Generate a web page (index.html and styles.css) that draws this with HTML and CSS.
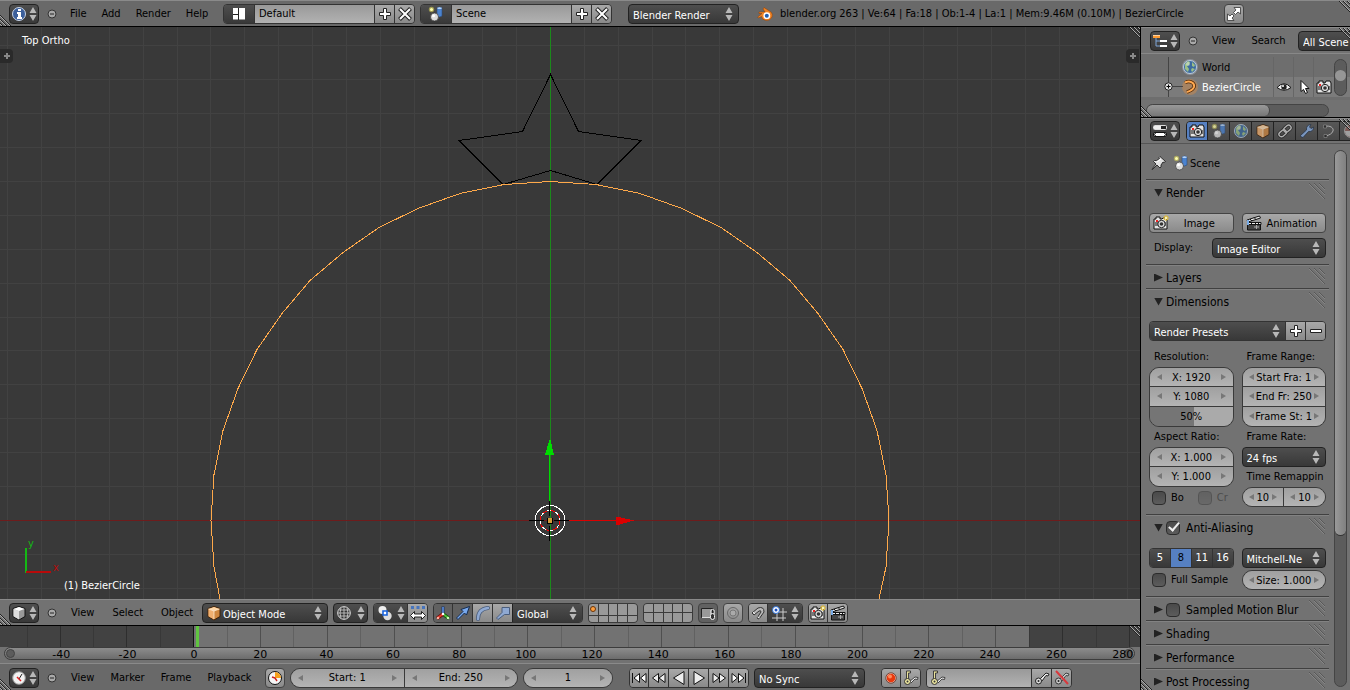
FILE: index.html
```html
<!DOCTYPE html>
<html lang="en">
<head>
    <meta charset="UTF-8">
    <meta name="viewport" content="width=device-width, initial-scale=1.0">
    <title>Blender</title>
    <link rel="stylesheet" href="styles.css">
</head>
<body>
    <!-- icons -->
    <svg class="defs" width="0" height="0" aria-hidden="true">
        <symbol id="arrows" viewBox="0 0 8 14"><path d="M4 0L7.500 6H.5zM4 14L.5 8h7z" fill="#b8b8b8"/></symbol>
        <symbol id="minus" viewBox="0 0 12 12"><circle cx="6" cy="6" r="4" fill="#a9a9a9" stroke="#333"/><path d="M4 6h4" stroke="#222"/></symbol>
        <symbol id="expand" viewBox="0 0 9 9"><circle cx="4.500" cy="4.500" r="3.700" fill="#e4e4e4" stroke="#222"/><path d="M2.500 4.500h4M4.500 2.500v4" stroke="#000"/></symbol>
        <symbol id="info" viewBox="0 0 16 16"><circle cx="8" cy="8" r="6.500" fill="#3b5f9b" stroke="#c8d4e6"/><path d="M7 3h3v2H7zM6 6h4v5h1v2H6v-2h1V8H6z" fill="#fff"/></symbol>
        <symbol id="layout" viewBox="0 0 16 16"><path d="M2 2h5v6H2zM8 2h6v11H8zM2 9h5v4H2z" fill="#fff"/><path d="M2 13.500h12" stroke="#999"/><path d="M2 8.500h6M7.500 2v12" stroke="#222"/></symbol>
        <symbol id="scene" viewBox="0 0 16 16"><path d="M9 2q3-2 5 0v8q-3 2-5 0z" fill="#4b83cf" stroke="#2c4c7a" stroke-width=".6"/><path d="M9.300 2.500q2 1 4.500 0v-.8q-2.500-1-4.500 0z" fill="#b8d4f5"/><circle cx="3.500" cy="3.500" r="2.700" fill="#d4cf5a" opacity=".6"/><circle cx="3.500" cy="3.500" r="1.500" fill="#ffffb0"/><circle cx="6.500" cy="11" r="4" fill="#ddd" stroke="#333" stroke-width=".7"/><circle cx="5.500" cy="9.700" r="1.500" fill="#fff"/></symbol>
        <symbol id="add" viewBox="0 0 16 16"><path d="M6.500 2.500h3v4h4v3h-4v4h-3v-4h-4v-3h4z" fill="#fff" stroke="#222"/></symbol>
        <symbol id="remove" viewBox="0 0 16 16"><path d="M2.500 6.500h11v3h-11z" fill="#fff" stroke="#222"/></symbol>
        <symbol id="close" viewBox="0 0 16 16"><path d="M2.500 2.500l11 11M13.500 2.500l-11 11" stroke="#222" stroke-width="4"/><path d="M3 3L13 13M13 3L3 13" stroke="#fff" stroke-width="2"/></symbol>
        <symbol id="blender" viewBox="0 0 16 16"><path d="M7 1.500L14 6q2 2 1 5-2 4-6 3.500-4-.5-4.500-4L1.500 12 .7 11 5 7.500H2V6h6L6 3z" fill="#ee8224" stroke="#8c3d05" stroke-width=".5"/><circle cx="9.800" cy="9.700" r="3.400" fill="#fff"/><circle cx="9.800" cy="9.700" r="2" fill="#225fb0"/></symbol>
        <symbol id="full" viewBox="0 0 16 16"><path d="M8 1.500h6.500V8L12 6 9.500 8.500l-2-2L10 4zM1.500 8L4 10l2-2 2 2-2 2 2 2.500H1.500z" fill="#fff" stroke="#333" stroke-width=".8"/></symbol>
        <symbol id="tree" viewBox="0 0 16 16"><path d="M4 4v9h4M4 8h4" fill="none" stroke="#7fa6d8"/><path d="M1 2h7v3H1z" fill="#ff9a2e"/><path d="M1 2h7v1H1z" fill="#ffd2a0"/><path d="M8 7h7v2H8zM8 12h7v2H8z" fill="#fff"/></symbol>
        <symbol id="world" viewBox="0 0 16 16"><circle cx="8" cy="8" r="6.500" fill="#3d6ba0" stroke="#bcd"/><path d="M3 5l3-3 2 1-1 3-2 1 2 3-1 3-3-3zM10 3l3 3-1 2-2-1zM10 9l3 1-3 3-1-2z" fill="#9bbf86"/><circle cx="6" cy="5" r="2" fill="#fff" opacity=".35"/></symbol>
        <symbol id="curve" viewBox="0 0 16 16"><path d="M3 3.500C8 1 13 4 12 8c-1 3-4 4-7 5" fill="none" stroke="#4a2405" stroke-width="3.500"/><path d="M3 3.500C8 1 13 4 12 8c-1 3-4 4-7 5" fill="none" stroke="#ffa850" stroke-width="2"/></symbol>
        <symbol id="curvegrey" viewBox="0 0 16 16"><path d="M4 3.500C9 2 13 5 12 8c-1 3-4 4-7 5" fill="none" stroke="#ccc"/><path d="M2.500 2h3v3h-3zM3 11.500h3v3H3z" fill="#222" stroke="#bbb" stroke-width=".5"/></symbol>
        <symbol id="eye" viewBox="0 0 16 16"><path d="M1 8.500Q8 1 15 8.500 8 14 1 8.500z" fill="#eee" stroke="#111"/><circle cx="8" cy="8" r="2.700" fill="#222"/><circle cx="7" cy="7" r="1" fill="#fff"/></symbol>
        <symbol id="pointer" viewBox="0 0 16 16"><path d="M5 1.500v11l2.500-2 2 4 2-1-2-4H13z" fill="#fff" stroke="#111"/></symbol>
        <symbol id="camera" viewBox="0 0 16 16"><path d="M1 4h2V2h4v2h2l1-2h4l1 2v10H1z" fill="#e4e4e4" stroke="#111"/><path d="M1.500 7h13v4h-13z" fill="#777"/><circle cx="9" cy="9" r="3.700" fill="#ddd" stroke="#222"/><circle cx="9" cy="9" r="1.800" fill="#333"/><path d="M3 5h2v2H3z" fill="#e22"/></symbol>
        <symbol id="camstar" viewBox="0 0 16 16"><path d="M1 4h2V2h4v2h2l1-1h3l1 2v9H1z" fill="#e4e4e4" stroke="#111"/><path d="M1.500 7h12v4h-12z" fill="#777"/><circle cx="8.500" cy="9" r="3.700" fill="#ddd" stroke="#222"/><circle cx="8.500" cy="9" r="1.800" fill="#333"/><path d="M3 5h2v2H3z" fill="#e22"/><path d="M13 0v6M10 3h6M11 1l4 4M15 1l-4 4" stroke="#e8bd27"/><circle cx="13" cy="3" r="1.300" fill="#fff6b0"/></symbol>
        <symbol id="clapper" viewBox="0 0 16 16"><path d="M1.500 8h13v7h-13z" fill="#444" stroke="#111"/><path d="M2 7.500h13v2H2zM1 5l12.500-4 1 2-12.500 4z" fill="#eee" stroke="#111"/><path d="M4 4l2 2M8 2.500l2 2M6 7l-1 3M10 7l-1 3M13 7l-1 3" stroke="#111"/><path d="M8 12h5M10.500 10v4" stroke="#aaa"/><path d="M1 5h2v5H1z" fill="#77aae5"/></symbol>
        <symbol id="props" viewBox="0 0 16 16"><rect x="1.500" y="2.500" width="13" height="4" rx="1" fill="#222" stroke="#ddd"/><path d="M2 3h7v3H2z" fill="#eee"/><rect x="1.500" y="9.500" width="13" height="4" rx="1.500" fill="#fff" stroke="#111"/><path d="M4 10l-2 1.500L4 13M12 10l2 1.500-2 1.500" fill="none" stroke="#333"/></symbol>
        <symbol id="cube" viewBox="0 0 16 16"><path d="M8 1.500l6 2v8L8 15l-6-3.500v-8z" fill="#cf8740" stroke="#3e2108"/><path d="M2.500 4L8 6v8.500l-5.500-3.300z" fill="#f0b071"/><path d="M2.500 4L8 2l5.500 2L8 6z" fill="#ffd6a6"/><path d="M2.500 4L8 6l5.500-2M8 6v8" fill="none" stroke="#fff0dc" stroke-width=".7"/></symbol>
        <symbol id="cubegrey" viewBox="0 0 16 16"><path d="M8 1.500l6 2v8L8 15l-6-3.500v-8z" fill="#999" stroke="#111"/><path d="M2.500 4L8 6v8.500l-5.500-3.300z" fill="#ddd"/><path d="M2.500 4L8 2l5.500 2L8 6z" fill="#fff"/></symbol>
        <symbol id="chain" viewBox="0 0 16 16"><g fill="none" stroke="#222" stroke-width="3"><rect x="6.500" y="3.500" width="8" height="5" rx="2.500" transform="rotate(-40 10 6)"/><rect x="1.500" y="7.500" width="8" height="5" rx="2.500" transform="rotate(-40 6 10)"/></g><g fill="none" stroke="#d0d0d0" stroke-width="1.400"><rect x="6.500" y="3.500" width="8" height="5" rx="2.500" transform="rotate(-40 10 6)"/><rect x="1.500" y="7.500" width="8" height="5" rx="2.500" transform="rotate(-40 6 10)"/></g></symbol>
        <symbol id="wrench" viewBox="0 0 16 16"><path d="M1.500 12.500L7.500 7q-.5-5 4.500-5.500L10.500 4 12 5.500 14.500 4q0 5-5 4.500L4 14.500q-2.500 0-2.500-2z" fill="#88aee4" stroke="#1c2b42" stroke-width=".8"/></symbol>
        <symbol id="sphere" viewBox="0 0 16 16"><circle cx="8" cy="8" r="6.500" fill="#8b5c58" stroke="#aaa"/><path d="M8 2v6h6q0-5-6-6zM2 8h6v6Q2 13 2 8z" fill="#bbb"/></symbol>
        <symbol id="pin" viewBox="0 0 16 16"><path d="M9 1.500l5.500 5-1.500 1-1-.5-2 3v2l-1 1-3-3L2 14l-1 .5.500-1L5 9 2.500 6.500l1-1h2l3-2-.5-1z" fill="#e2e2e2" stroke="#222" stroke-width=".9"/><path d="M6 7l4-3" stroke="#fff"/></symbol>
        <symbol id="tripod" viewBox="0 0 16 16"><path d="M8 1.500V9" stroke="#1d3560" stroke-width="3"/><path d="M8 2v7" stroke="#5a8de0" stroke-width="1.600"/><path d="M8 9l6 4.500" stroke="#15500c" stroke-width="3.500"/><path d="M8 9l5.500 4" stroke="#4cc43a" stroke-width="2"/><path d="M8 9l-6 4.500" stroke="#6b0f0a" stroke-width="3.500"/><path d="M8 9l-5.500 4" stroke="#ee3a2c" stroke-width="2"/><circle cx="3" cy="13" r="1.300" fill="#ffb0a0"/><circle cx="13" cy="13" r="1.300" fill="#c8f8b4"/><circle cx="8" cy="9" r="1.300" fill="#fff"/></symbol>
        <symbol id="translate" viewBox="0 0 16 16"><path d="M1.500 13L8 6.500l-2-2 8.500-3-3 8.500-2-2L3 14.500z" fill="#78a8ec" stroke="#142a4e"/></symbol>
        <symbol id="rotate" viewBox="0 0 16 16"><path d="M3 14Q3 4 13 3" fill="none" stroke="#4a5d7c" stroke-width="4" stroke-linecap="round"/><path d="M3 14Q3 4 13 3" fill="none" stroke="#8fa9d2" stroke-width="2.400" stroke-linecap="round"/></symbol>
        <symbol id="scale" viewBox="0 0 16 16"><path d="M1.500 13L7 7.500v-5h7.500v7h-5L3 14.500z" fill="#8fa9d2" stroke="#4a5d7c"/></symbol>
        <symbol id="globe" viewBox="0 0 16 16"><circle cx="8" cy="8" r="6.300" fill="#333" stroke="#e6e6e6"/><path d="M8 2v12M2 8h12M5 3Q3 8 5 13M11 3q2 5 0 10M3 5h10M3 11h10" fill="none" stroke="#c4c4c4" stroke-width=".9"/></symbol>
        <symbol id="pivot" viewBox="0 0 16 16"><circle cx="5.500" cy="5" r="4" fill="#eee"/><circle cx="10.500" cy="11" r="4.200" fill="#ddd"/><path d="M6 6h4v4H6z" fill="#fff" stroke="#1762dd" stroke-width="1.600"/></symbol>
        <symbol id="spread" viewBox="0 0 16 16"><path d="M1 1h3v3H1zM6.500 1h3v3h-3zM12 1h3v3h-3z" fill="#4674bd"/><path d="M.5 10.500l4-4V9h7V6.500l4 4-4 4V12h-7v2.500z" fill="#fff" stroke="#111" stroke-width=".9"/></symbol>
        <symbol id="lock" viewBox="0 0 16 16"><path d="M1.500 3.500h11v9h-11z" fill="#999" stroke="#222"/><path d="M2 12.500h11" stroke="#ddd"/><rect x="10.500" y="4.500" width="4" height="5" rx="2" fill="none" stroke="#ddd"/><rect x="10.500" y="8.500" width="4" height="6" rx="2" fill="#333" stroke="#eee"/></symbol>
        <symbol id="ring" viewBox="0 0 16 16"><circle cx="8" cy="8" r="5.500" fill="none" stroke="#666"/><circle cx="8" cy="8" r="3" fill="#aaa" stroke="#777"/></symbol>
        <symbol id="magnet" viewBox="0 0 16 16"><path d="M2 8l6-5q6-2 6 4l-5 7-2-1 4-6q0-2-2-1L4 10z" fill="#bbb" stroke="#333"/><path d="M3 7l2 2M7.500 12l2 1" stroke="#eee"/></symbol>
        <symbol id="snap" viewBox="0 0 16 16"><path d="M6 2v14M12 3v13M2 7h14M1 13h14" stroke="#ccc"/><circle cx="5" cy="5" r="3.500" fill="#fff" stroke="#2b6fd6"/><circle cx="5" cy="5" r="1.500" fill="#1c4fbd"/></symbol>
        <symbol id="clock" viewBox="0 0 16 16"><circle cx="8" cy="8" r="6.300" fill="#f2f2f2" stroke="#999"/><path d="M8 9l3-5" stroke="#222"/><path d="M8 9L6 7M8 9l2 2" stroke="#d22" stroke-width="1.500"/></symbol>
        <symbol id="range" viewBox="0 0 16 16"><circle cx="8" cy="8" r="6.500" fill="#f6f6f6" stroke="#111"/><path d="M8 2a6 6 0 0 1 6 6H8z" fill="#f7a11c"/><path d="M8 8l2 3M8 8L5 7" stroke="#c22" stroke-width="1.400"/></symbol>
        <symbol id="first" viewBox="0 0 16 16"><path d="M1.500 3v10M8.500 3.500v9L3 8zM15 3.500v9L9.500 8z" fill="#fff" stroke="#111"/></symbol>
        <symbol id="prev" viewBox="0 0 16 16"><path d="M7.500 3.500v9L1.500 8zM14 3.500v9L8 8z" fill="#eee" stroke="#111"/></symbol>
        <symbol id="back" viewBox="0 0 16 16"><path d="M13 1.500v13L2.500 8z" fill="#eee" stroke="#111"/></symbol>
        <symbol id="play" viewBox="0 0 16 16"><path d="M3 1.500v13L13.500 8z" fill="#eee" stroke="#111"/></symbol>
        <symbol id="next" viewBox="0 0 16 16"><path d="M8.500 3.500v9l6-4.500zM2 3.500v9L8 8z" fill="#eee" stroke="#111"/></symbol>
        <symbol id="last" viewBox="0 0 16 16"><path d="M14.500 3v10M7.500 3.500v9L13 8zM1 3.500v9L6.500 8z" fill="#fff" stroke="#111"/></symbol>
        <symbol id="rec" viewBox="0 0 16 16"><circle cx="8" cy="8" r="4.700" fill="#e8380d" stroke="#fff" stroke-width=".6"/><circle cx="8" cy="8" r="5.200" fill="none" stroke="#5d1a08" stroke-width=".7"/><circle cx="7" cy="6.500" r="2" fill="#ff8a5c"/></symbol>
        <symbol id="keys" viewBox="0 0 16 16"><path d="M3.500 9V1h4v2H5.500v6" fill="#e9e29a" stroke="#333" stroke-width=".9"/><path d="M6 12l6-5 3 .5-.5 2-2.500-.5-4 4" fill="#eee" stroke="#333" stroke-width=".9"/><circle cx="4.500" cy="11.500" r="3" fill="#eee8a0" stroke="#333"/><circle cx="4.500" cy="11.500" r="1" fill="#333"/></symbol>
        <symbol id="key" viewBox="0 0 16 16"><path d="M6 9l6-6 3 1-1 2-2-.5L8 11" fill="#eee" stroke="#222"/><circle cx="4.500" cy="11" r="3" fill="#ddd" stroke="#222"/><circle cx="4.500" cy="11" r="1" fill="#222"/></symbol>
        <symbol id="nokey" viewBox="0 0 16 16"><path d="M6 9l6-6 3 1-1 2-2-.5L8 11" fill="#ccc" stroke="#444"/><circle cx="4.500" cy="11" r="3" fill="#ccc" stroke="#333"/><circle cx="4.500" cy="11" r="1" fill="#222"/><path d="M2 1l12 13" stroke="#d9383c" stroke-width="2"/></symbol>
        <symbol id="corner" viewBox="0 0 12 12"><path d="M0 1l11 11M0 5l7 7M0 9l3 3" stroke="#222"/><path d="M0 2l10 10M0 6l6 6M0 10l2 2" stroke="#aaa"/></symbol>
        <symbol id="grip" viewBox="0 0 16 16"><path d="M0 0l16 16M5 0l11 11M10 0l6 6" stroke="#585858"/><path d="M0 1l15 15M5 1l11 11M10 1l6 6" stroke="#858585"/></symbol>
    </svg>

    <header class="bar info-bar">
        <button class="dark editor" aria-label="Editor type"><svg class="icon"><use href="#info"/></svg><svg class="arrows"><use href="#arrows"/></svg></button>
        <button class="collapse" aria-label="Collapse menus"><svg><use href="#minus"/></svg></button>
        <nav class="menu"><a href="#">File</a><a href="#">Add</a><a href="#">Render</a><a href="#">Help</a></nav>
        <div class="group datablock">
            <button class="dark" aria-label="Browse layouts"><svg class="icon"><use href="#layout"/></svg></button>
            <input type="text" value="Default" aria-label="Layout name">
            <button aria-label="Add layout"><svg class="icon"><use href="#add"/></svg></button>
            <button aria-label="Delete layout"><svg class="icon"><use href="#close"/></svg></button>
        </div>
        <div class="group datablock">
            <button class="dark" aria-label="Browse scenes"><svg class="icon"><use href="#scene"/></svg></button>
            <input type="text" value="Scene" aria-label="Scene name">
            <button aria-label="Add scene"><svg class="icon"><use href="#add"/></svg></button>
            <button aria-label="Delete scene"><svg class="icon"><use href="#close"/></svg></button>
        </div>
        <div class="pick engine"><select aria-label="Render engine"><option>Blender Render</option></select><svg class="arrows"><use href="#arrows"/></svg></div>
        <div class="stats"><svg class="icon"><use href="#blender"/></svg><span>blender.org 263 | Ve:64 | Fa:18 | Ob:1-4 | La:1 | Mem:9.46M (0.10M) | BezierCircle</span></div>
        <button class="square" aria-label="Toggle fullscreen"><svg class="icon"><use href="#full"/></svg></button>
        <svg class="corner bottom-left"><use href="#corner"/></svg>
        <svg class="corner top-right"><use href="#corner"/></svg>
    </header>

    <div class="workspace">
        <main class="left">
            <section class="viewport">
                <svg class="scene" viewBox="0 0 1140 572" preserveAspectRatio="xMidYMid slice" fill="none" shape-rendering="crispEdges">
                    <path stroke="#424242" d="M7.500 0v572M41.500 0v572M75.500 0v572M109.500 0v572M143.500 0v572M177.500 0v572M210.500 0v572M244.500 0v572M278.500 0v572M312.500 0v572M346.500 0v572M380.500 0v572M414.500 0v572M448.500 0v572M482.500 0v572M516.500 0v572M584.500 0v572M618.500 0v572M652.500 0v572M685.500 0v572M719.500 0v572M753.500 0v572M787.500 0v572M821.500 0v572M855.500 0v572M889.500 0v572M923.500 0v572M957.500 0v572M991.500 0v572M1025.500 0v572M1059.500 0v572M1093.500 0v572M1127.500 0v572"/>
                    <path stroke="#424242" d="M0 18.500h1140M0 52.500h1140M0 86.500h1140M0 120.500h1140M0 154.500h1140M0 188.500h1140M0 222.500h1140M0 256.500h1140M0 290.500h1140M0 323.500h1140M0 357.500h1140M0 391.500h1140M0 425.500h1140M0 459.500h1140M0 527.500h1140M0 561.500h1140"/>
                    <path stroke="#6e1c1c" d="M0 493.500h1140"/>
                    <path stroke="#1b8a1b" d="M550.500 0v572"/>
                    <path stroke="#000" d="M550.500 47.500L578.500 104.500L641 113.500L597 157.500L550.500 143.500L503 157.500L459 113.500L522.500 104.500Z"/>
                    <path stroke="#ffa94a" d="M220 572L214 540L211 493.500L214 447.500L223 403.500L238 361.500L257 322.500L282 286.500L310 253.500L343 225.500L379 200.500L418 181.500L460 166.500L504 157.500L550 154.500L596 157.500L640 166.500L682 181.500L721 200.500L757 225.500L790 253.500L818 286.500L843 322.500L862 361.500L877 403.500L886 447.500L889 493.500L886 540L879 572"/>
                    <path stroke="#00dc00" d="M549.500 428v46"/>
                    <path fill="#00dc00" d="M550 411l4 17h-9z"/>
                    <path stroke="#dc0000" d="M569 493.500h48"/>
                    <path fill="#dc0000" d="M634 493.500l-18 5v-9z"/>
                    <circle cx="550" cy="493.500" r="15" stroke="#fff"/>
                    <circle cx="550" cy="493.500" r="10" stroke="#fff"/>
                    <circle cx="550" cy="493.500" r="10" stroke="#f00" stroke-dasharray="4 4"/>
                    <path stroke="#000" d="M529 493.500h15M554 493.500h15M549.500 474v15M549.500 499v15"/>
                    <path fill="#000" d="M547 491h6v6h-6z"/>
                    <path fill="#d29a3c" d="M548 491h4v5h-4z"/>
                    <path stroke="#14b814" stroke-width="2" d="M26 521v25"/>
                    <path stroke="#b80a0a" stroke-width="2" d="M26 545h25"/>
                </svg>
                <span class="overlay view-name">Top Ortho</span>
                <span class="overlay object-name">(1) BezierCircle</span>
                <span class="overlay axis-y">y</span>
                <span class="overlay axis-x">x</span>
                <button class="tab tab-left" aria-label="Show tool shelf"></button>
                <button class="tab tab-right" aria-label="Show properties"></button>
                <svg class="corner top-right"><use href="#corner"/></svg>
            </section>

            <div class="bar view-bar">
                <button class="dark editor" aria-label="Editor type"><svg class="icon"><use href="#cubegrey"/></svg><svg class="arrows"><use href="#arrows"/></svg></button>
                <button class="collapse" aria-label="Collapse menus"><svg><use href="#minus"/></svg></button>
                <nav class="menu"><a href="#">View</a><a href="#">Select</a><a href="#">Object</a></nav>
                <div class="pick mode"><svg class="icon"><use href="#cube"/></svg><select aria-label="Mode"><option>Object Mode</option></select><svg class="arrows"><use href="#arrows"/></svg></div>
                <button class="dark shading" aria-label="Viewport shading"><svg class="icon"><use href="#globe"/></svg><svg class="arrows"><use href="#arrows"/></svg></button>
                <div class="group">
                    <button class="dark wide" aria-label="Pivot point"><svg class="icon"><use href="#pivot"/></svg><svg class="arrows"><use href="#arrows"/></svg></button>
                    <button aria-label="Manipulate centers"><svg class="icon"><use href="#spread"/></svg></button>
                </div>
                <div class="group manipulator">
                    <button class="pressed" aria-label="Manipulator"><svg class="icon"><use href="#tripod"/></svg></button>
                    <button class="pressed" aria-label="Translate"><svg class="icon"><use href="#translate"/></svg></button>
                    <button aria-label="Rotate"><svg class="icon"><use href="#rotate"/></svg></button>
                    <button aria-label="Scale"><svg class="icon"><use href="#scale"/></svg></button>
                    <div class="pick"><select aria-label="Orientation"><option>Global</option></select><svg class="arrows"><use href="#arrows"/></svg></div>
                </div>
                <div class="layers">
                    <button class="used" aria-label="Layer 1"></button><button aria-label="Layer 2"></button><button aria-label="Layer 3"></button><button aria-label="Layer 4"></button><button aria-label="Layer 5"></button>
                    <button aria-label="Layer 11"></button><button aria-label="Layer 12"></button><button aria-label="Layer 13"></button><button aria-label="Layer 14"></button><button aria-label="Layer 15"></button>
                </div>
                <div class="layers">
                    <button aria-label="Layer 6"></button><button aria-label="Layer 7"></button><button aria-label="Layer 8"></button><button aria-label="Layer 9"></button><button aria-label="Layer 10"></button>
                    <button aria-label="Layer 16"></button><button aria-label="Layer 17"></button><button aria-label="Layer 18"></button><button aria-label="Layer 19"></button><button aria-label="Layer 20"></button>
                </div>
                <button class="square pressed" aria-label="Lock to scene"><svg class="icon"><use href="#lock"/></svg></button>
                <button class="square" aria-label="Proportional editing"><svg class="icon"><use href="#ring"/></svg></button>
                <div class="group">
                    <button aria-label="Snap"><svg class="icon"><use href="#magnet"/></svg></button>
                    <button class="dark wide" aria-label="Snap element"><svg class="icon"><use href="#snap"/></svg><svg class="arrows"><use href="#arrows"/></svg></button>
                </div>
                <div class="group">
                    <button aria-label="Render image"><svg class="icon"><use href="#camstar"/></svg></button>
                    <button aria-label="Render animation"><svg class="icon"><use href="#clapper"/></svg></button>
                </div>
                <svg class="corner bottom-left"><use href="#corner"/></svg>
            </div>

            <section class="timeline">
                <svg class="track" viewBox="0 0 1140 20" preserveAspectRatio="none" shape-rendering="crispEdges">
                    <path fill="#424242" d="M0 0h1140v20H0z"/>
                    <path fill="#727272" d="M194 0h835v20H194z"/>
                    <path stroke="#000" stroke-opacity=".15" d="M27.500 0v20M93.500 0v20M160.500 0v20M227.500 0v20M293.500 0v20M360.500 0v20M427.500 0v20M494.500 0v20M561.500 0v20M628.500 0v20M694.500 0v20M761.500 0v20M828.500 0v20M895.500 0v20M962.500 0v20M1029.500 0v20M1096.500 0v20"/>
                    <path stroke="#000" stroke-opacity=".3" d="M60.500 0v20M126.500 0v20M193.500 0v20M260.500 0v20M327.500 0v20M394.500 0v20M461.500 0v20M527.500 0v20M594.500 0v20M661.500 0v20M728.500 0v20M795.500 0v20M862.500 0v20M928.500 0v20M995.500 0v20M1062.500 0v20M1129.500 0v20"/>
                    <path fill="#111" d="M193 0h1v20h-1z"/>
                    <path fill="#60c440" d="M196 0h3v20h-3z"/>
                </svg>
                <div class="time-scroll"></div>
                <div class="time-labels">
                    <span>-40</span><span>-20</span><span>0</span><span>20</span><span>40</span><span>60</span><span>80</span><span>100</span><span>120</span><span>140</span><span>160</span><span>180</span><span>200</span><span>220</span><span>240</span><span>260</span><span>280</span>
                </div>
                <svg class="corner top-right"><use href="#corner"/></svg>
            </section>

            <footer class="bar time-bar">
                <button class="dark editor" aria-label="Editor type"><svg class="icon"><use href="#clock"/></svg><svg class="arrows"><use href="#arrows"/></svg></button>
                <button class="collapse" aria-label="Collapse menus"><svg><use href="#minus"/></svg></button>
                <nav class="menu"><a href="#">View</a><a href="#">Marker</a><a href="#">Frame</a><a href="#">Playback</a></nav>
                <button class="square" aria-label="Preview range"><svg class="icon"><use href="#range"/></svg></button>
                <div class="numbers frames"><label class="num"><input type="text" value="Start: 1" aria-label="Start frame"></label><label class="num"><input type="text" value="End: 250" aria-label="End frame"></label></div>
                <div class="numbers current"><label class="num"><input type="text" value="1" aria-label="Current frame"></label></div>
                <div class="group playback">
                    <button aria-label="First frame"><svg class="icon"><use href="#first"/></svg></button>
                    <button aria-label="Previous keyframe"><svg class="icon"><use href="#prev"/></svg></button>
                    <button aria-label="Play reversed"><svg class="icon"><use href="#back"/></svg></button>
                    <button aria-label="Play"><svg class="icon"><use href="#play"/></svg></button>
                    <button aria-label="Next keyframe"><svg class="icon"><use href="#next"/></svg></button>
                    <button aria-label="Last frame"><svg class="icon"><use href="#last"/></svg></button>
                </div>
                <div class="pick sync"><select aria-label="Sync mode"><option>No Sync</option></select><svg class="arrows"><use href="#arrows"/></svg></div>
                <div class="group record">
                    <button aria-label="Record"><svg class="icon"><use href="#rec"/></svg></button>
                    <button aria-label="Keying set only"><svg class="icon"><use href="#keys"/></svg></button>
                </div>
                <div class="group keying">
                    <div class="keyset"><svg class="icon"><use href="#keys"/></svg><input type="text" aria-label="Keying set"></div>
                    <button aria-label="Insert keyframe"><svg class="icon"><use href="#key"/></svg></button>
                    <button aria-label="Delete keyframe"><svg class="icon"><use href="#nokey"/></svg></button>
                </div>
                <svg class="corner bottom-left"><use href="#corner"/></svg>
            </footer>
        </main>

        <aside class="right">
            <section class="outliner">
                <div class="bar">
                    <button class="dark editor" aria-label="Editor type"><svg class="icon"><use href="#tree"/></svg><svg class="arrows"><use href="#arrows"/></svg></button>
                    <button class="collapse" aria-label="Collapse menus"><svg><use href="#minus"/></svg></button>
                    <nav class="menu"><a href="#">View</a><a href="#">Search</a></nav>
                    <div class="pick scenes"><select aria-label="Display mode"><option>All Scene</option></select></div>
                    <svg class="corner top-right"><use href="#corner"/></svg>
                </div>
                <div class="tree">
                    <div class="tree-row"><span class="branch"></span><svg class="icon halo"><use href="#world"/></svg><span class="name">World</span><span class="cell"></span><span class="cell"></span><span class="cell"></span></div>
                    <div class="tree-row selected"><span class="branch plus"><svg class="expand"><use href="#expand"/></svg></span><svg class="icon halo orange"><use href="#curve"/></svg><span class="name">BezierCircle</span>
                        <button class="cell" aria-label="Visible"><svg class="icon"><use href="#eye"/></svg></button>
                        <button class="cell" aria-label="Selectable"><svg class="icon"><use href="#pointer"/></svg></button>
                        <button class="cell" aria-label="Renderable"><svg class="icon"><use href="#camera"/></svg></button>
                    </div>
                    <div class="tree-scroll"></div>
                </div>
                <div class="h-scroll"><div class="h-thumb"></div></div>
                <svg class="corner bottom-left"><use href="#corner"/></svg>
            </section>

            <section class="properties">
                <div class="bar">
                    <button class="dark editor" aria-label="Editor type"><svg class="icon"><use href="#props"/></svg><svg class="arrows"><use href="#arrows"/></svg></button>
                    <div class="tabs">
                        <button class="active" aria-label="Render"><svg class="icon"><use href="#camera"/></svg></button>
                        <button aria-label="Scene"><svg class="icon"><use href="#scene"/></svg></button>
                        <button aria-label="World"><svg class="icon"><use href="#world"/></svg></button>
                        <button aria-label="Object"><svg class="icon"><use href="#cube"/></svg></button>
                        <button aria-label="Constraints"><svg class="icon"><use href="#chain"/></svg></button>
                        <button aria-label="Modifiers"><svg class="icon"><use href="#wrench"/></svg></button>
                        <button aria-label="Data"><svg class="icon"><use href="#curvegrey"/></svg></button>
                        <button aria-label="Material"><svg class="icon"><use href="#sphere"/></svg></button>
                    </div>
                    <svg class="corner top-right"><use href="#corner"/></svg>
                </div>
                <div class="props-body">
                    <div class="panels">
                        <div class="context"><svg class="icon"><use href="#pin"/></svg><svg class="icon"><use href="#scene"/></svg><span>Scene</span></div>

                        <div class="panel">
                            <h2 class="open">Render<svg class="grip"><use href="#grip"/></svg></h2>
                            <div class="columns">
                                <button class="action"><svg class="icon"><use href="#camstar"/></svg><span>Image</span></button>
                                <button class="action"><svg class="icon"><use href="#clapper"/></svg><span>Animation</span></button>
                            </div>
                            <div class="field"><label for="display">Display:</label><div class="pick"><select id="display"><option>Image Editor</option></select><svg class="arrows"><use href="#arrows"/></svg></div></div>
                        </div>

                        <div class="panel">
                            <h2>Layers<svg class="grip"><use href="#grip"/></svg></h2>
                        </div>

                        <div class="panel dimensions">
                            <h2 class="open">Dimensions<svg class="grip"><use href="#grip"/></svg></h2>
                            <div class="group presets">
                                <div class="pick"><select aria-label="Render presets"><option>Render Presets</option></select><svg class="arrows"><use href="#arrows"/></svg></div>
                                <button aria-label="Add preset"><svg class="icon"><use href="#add"/></svg></button>
                                <button aria-label="Remove preset"><svg class="icon"><use href="#remove"/></svg></button>
                            </div>
                            <div class="columns">
                                <div class="column">
                                    <p>Resolution:</p>
                                    <div class="numbers stack">
                                        <label class="num"><input type="text" value="X: 1920" aria-label="Resolution X"></label>
                                        <label class="num"><input type="text" value="Y: 1080" aria-label="Resolution Y"></label>
                                        <label class="num percent"><input type="text" value="50%" aria-label="Resolution percentage"></label>
                                    </div>
                                    <p>Aspect Ratio:</p>
                                    <div class="numbers stack">
                                        <label class="num"><input type="text" value="X: 1.000" aria-label="Aspect X"></label>
                                        <label class="num"><input type="text" value="Y: 1.000" aria-label="Aspect Y"></label>
                                    </div>
                                    <div class="checks"><label><input type="checkbox">Bo</label><label class="off"><input type="checkbox" disabled>Cr</label></div>
                                </div>
                                <div class="column">
                                    <p>Frame Range:</p>
                                    <div class="numbers stack tight">
                                        <label class="num"><input type="text" value="Start Fra: 1" aria-label="Start frame"></label>
                                        <label class="num"><input type="text" value="End Fr: 250" aria-label="End frame"></label>
                                        <label class="num"><input type="text" value="Frame St: 1" aria-label="Frame step"></label>
                                    </div>
                                    <p>Frame Rate:</p>
                                    <div class="pick"><select aria-label="Frame rate"><option>24 fps</option></select><svg class="arrows"><use href="#arrows"/></svg></div>
                                    <p>Time Remappin</p>
                                    <div class="numbers tight"><label class="num"><input type="text" value="10" aria-label="Remap old"></label><label class="num"><input type="text" value="10" aria-label="Remap new"></label></div>
                                </div>
                            </div>
                        </div>

                        <div class="panel">
                            <h2 class="open"><input type="checkbox" checked aria-label="Anti-Aliasing">Anti-Aliasing<svg class="grip"><use href="#grip"/></svg></h2>
                            <div class="columns">
                                <div class="group samples"><button class="dark">5</button><button class="dark chosen">8</button><button class="dark">11</button><button class="dark">16</button></div>
                                <div class="pick"><select aria-label="Filter"><option>Mitchell-Ne</option></select><svg class="arrows"><use href="#arrows"/></svg></div>
                            </div>
                            <div class="columns close">
                                <div class="checks"><label><input type="checkbox">Full Sample</label></div>
                                <div class="numbers tight"><label class="num"><input type="text" value="Size: 1.000" aria-label="Filter size"></label></div>
                            </div>
                        </div>

                        <div class="panel"><h2><input type="checkbox" aria-label="Sampled Motion Blur">Sampled Motion Blur<svg class="grip"><use href="#grip"/></svg></h2></div>
                        <div class="panel"><h2>Shading<svg class="grip"><use href="#grip"/></svg></h2></div>
                        <div class="panel"><h2>Performance<svg class="grip"><use href="#grip"/></svg></h2></div>
                        <div class="panel"><h2>Post Processing<svg class="grip"><use href="#grip"/></svg></h2></div>
                    </div>
                    <div class="v-scroll"><div class="v-thumb"></div></div>
                </div>
                <svg class="corner bottom-left"><use href="#corner"/></svg>
            </section>
        </aside>
    </div>
</body>
</html>
```
FILE: styles.css
```css
* {
    box-sizing: border-box;
}
body {
    margin: 0;
    height: 100vh;
    display: flex;
    flex-direction: column;
    overflow: hidden;
    background: #727272;
    color: #000;
    font: 11px/20px "DejaVu Sans Condensed", "DejaVu Sans", sans-serif;
}
.defs {
    position: absolute;
}
button, input, select {
    font: inherit;
    color: inherit;
    margin: 0;
    padding: 0;
    border: 0;
    outline: 0;
    border-radius: 0;
    background: none;
    appearance: none;
    min-width: 0;
}
input[type="text"], select {
    padding-top: 1px;
}
button {
    display: flex;
    align-items: center;
    justify-content: center;
    flex-shrink: 0;
}
a {
    color: inherit;
    text-decoration: none;
}
.icon {
    width: 16px;
    height: 16px;
    flex-shrink: 0;
}
.arrows {
    width: 8px;
    height: 14px;
    flex-shrink: 0;
}

/* headers */
.bar {
    position: relative;
    display: flex;
    align-items: center;
    gap: 5px;
    height: 27px;
    padding-left: 9px;
    flex-shrink: 0;
    overflow: hidden;
    white-space: nowrap;
    background: #727272;
    border-top: 1px solid #8a8a8a;
    border-bottom: 1px solid #000;
}
.info-bar, .time-bar {
    background: #696969;
}
.editor {
    width: 30px;
    height: 20px;
    gap: 2px;
    border: 1px solid #222;
    border-radius: 4px;
}
.dark {
    background: linear-gradient(#4e4e4e, #383838);
    color: #fff;
}
.collapse {
    width: 12px;
    height: 12px;
    margin: 0 7px 0 2px;
}
.collapse svg {
    width: 12px;
    height: 12px;
}
.menu {
    display: flex;
    gap: 15px;
    width: 148px;
    padding-top: 1px;
    flex-shrink: 0;
}
.view-bar .menu {
    width: 127px;
    padding-left: 1px;
    gap: 18px;
}
.time-bar .menu {
    width: 190px;
    padding-left: 1px;
    gap: 16px;
}
.outliner .menu {
    width: 82px;
    padding-left: 1px;
    gap: 16px;
}
.group {
    display: flex;
    height: 20px;
    flex-shrink: 0;
    overflow: hidden;
    border: 1px solid #333;
    border-radius: 4px;
}
.group > * {
    border-left: 1px solid #333;
}
.group > :first-child {
    border-left: 0;
}
.group > button {
    width: 20px;
    background: linear-gradient(#a8a8a8, #8a8a8a);
}
.group > button:first-child {
    width: 18px;
}
.group > button.dark {
    background: linear-gradient(#4e4e4e, #383838);
}
.group > button.wide {
    width: 35px;
    gap: 4px;
}
.group > button.wide:first-child {
    width: 33px;
}
.group > button.pressed, .square.pressed {
    background: #616161;
}
.datablock {
    width: 192px;
}
.group.datablock > button:first-child {
    width: 30px;
}
.datablock input {
    flex: 1;
    padding-left: 4px;
    background: linear-gradient(#999, #b2b2b2);
}
.square {
    width: 20px;
    height: 20px;
    border: 1px solid #444;
    border-radius: 4px;
    background: linear-gradient(#a8a8a8, #8a8a8a);
}
.pick {
    position: relative;
    display: flex;
    align-items: center;
    height: 20px;
    flex-shrink: 0;
    color: #fff;
    border: 1px solid #222;
    border-radius: 4px;
    background: linear-gradient(#4e4e4e, #383838);
}
.group .pick {
    height: 18px;
    flex: 1;
    border-width: 0 0 0 1px;
    border-radius: 0;
}
.group .pick:first-child {
    border-left: 0;
}
.pick select {
    width: 100%;
    height: 18px;
    padding-left: 4px;
}
.pick option {
    color: #000;
}
.pick .arrows {
    position: absolute;
    right: 5px;
    pointer-events: none;
}
.engine, .sync {
    width: 111px;
}
.engine, .playback, .record {
    margin-left: 11px;
}
.stats {
    display: flex;
    align-items: center;
    gap: 7px;
    margin: 0 35px 0 13px;
}
.stats span {
    padding-top: 1px;
}
.mode {
    width: 126px;
}
.mode .icon {
    margin-left: 3px;
}
.mode select {
    padding-left: 1px;
}
.shading {
    width: 35px;
    height: 20px;
    gap: 5px;
    border: 1px solid #222;
    border-radius: 4px;
}
.manipulator {
    width: 150px;
}
.layers {
    display: grid;
    grid-template-columns: repeat(5, 1fr);
    gap: 1px;
    width: 50px;
    height: 20px;
    flex-shrink: 0;
    overflow: hidden;
    background: #3a3a3a;
    border: 1px solid #3a3a3a;
    border-radius: 4px;
}
.layers button {
    background: #999;
}
.layers .used::before {
    content: "";
    box-sizing: border-box;
    width: 6px;
    height: 6px;
    border: 1px solid #6b3305;
    border-radius: 50%;
    background: #ffa040;
}

/* number fields */
.numbers {
    display: flex;
    height: 20px;
    flex-shrink: 0;
    overflow: hidden;
    border: 1px solid #3a3a3a;
    border-radius: 10px;
}
.num {
    position: relative;
    display: flex;
    flex: 1;
    min-width: 0;
    background: linear-gradient(#a0a0a0, #b4b4b4);
}
.num + .num {
    border-left: 1px solid #3a3a3a;
}
.num input {
    width: 100%;
    height: 18px;
    text-align: center;
}
.num::before, .num::after {
    content: "";
    position: absolute;
    top: 6px;
    border: 3px solid transparent;
}
.num::before {
    left: 4px;
    border-right: 5px solid #777;
}
.num::after {
    right: 4px;
    border-left: 5px solid #777;
}
.tight .num::before {
    left: 3px;
}
.tight .num::after {
    right: 3px;
}
.frames {
    width: 228px;
}
.current {
    width: 90px;
}
.numbers.stack {
    flex-direction: column;
    height: auto;
}
.stack .num {
    flex: none;
    height: 20px;
}
.stack .num + .num {
    border-left: 0;
    border-top: 1px solid #3a3a3a;
}
.stack .num:first-child {
    height: 18px;
}
.num.percent {
    background: linear-gradient(90deg, #757575 53%, #aaa 53%);
}
.percent::before, .percent::after {
    display: none;
}

/* areas */
.workspace {
    display: flex;
    flex: 1;
    min-height: 0;
}
.left {
    display: flex;
    flex-direction: column;
    flex: 1;
    min-width: 0;
}
.right {
    display: flex;
    flex-direction: column;
    width: 210px;
    border-left: 1px solid #000;
}
.corner {
    position: absolute;
    width: 12px;
    height: 12px;
    pointer-events: none;
}
.corner.bottom-left {
    left: 0;
    bottom: 0;
}
.corner.top-right {
    top: 0;
    right: 0;
    transform: rotate(180deg);
}

.viewport {
    position: relative;
    flex: 1;
    min-height: 0;
    overflow: hidden;
    background: #393939;
}
.scene {
    display: block;
    width: 100%;
    height: 100%;
}
.overlay {
    position: absolute;
    color: #fff;
    line-height: 14px;
}
.view-name {
    left: 22px;
    top: 7px;
}
.object-name {
    left: 64px;
    bottom: 6px;
}
.axis-y {
    left: 28px;
    bottom: 48px;
    color: #14b814;
}
.axis-x {
    left: 53px;
    bottom: 24px;
    color: #b80a0a;
}
.tab {
    position: absolute;
    top: 22px;
    width: 13px;
    height: 14px;
    background: #2a2a2a;
}
.tab::before, .tab::after {
    content: "";
    position: absolute;
    width: 6px;
    height: 2px;
    background: #888;
}
.tab::after {
    width: 2px;
    height: 6px;
}
.tab-left {
    left: 0;
    border-radius: 0 4px 4px 0;
}
.tab-right {
    right: 1px;
    border-radius: 4px 0 0 4px;
}

.timeline {
    position: relative;
    flex-shrink: 0;
    height: 37px;
    overflow: hidden;
}
.track {
    display: block;
    width: 100%;
    height: 21px;
}
.time-scroll {
    position: relative;
    height: 13px;
    margin: 0 5px 0 4px;
    border: 1px solid #3c3c3c;
    border-radius: 7px;
    background: linear-gradient(#8c8c8c, #6c6c6c);
}
.time-scroll::before, .time-scroll::after {
    content: "";
    position: absolute;
    top: 1px;
    left: 1px;
    width: 7px;
    height: 7px;
    border-radius: 50%;
    border: 1px solid #444;
    background: #5c5c5c;
}
.time-scroll::after {
    left: auto;
    right: 1px;
}
.time-labels {
    position: absolute;
    left: 28px;
    right: -16px;
    top: 19px;
    display: grid;
    grid-template-columns: repeat(17, 1fr);
    text-align: center;
    font-family: "DejaVu Sans", sans-serif;
}
.bar.time-bar {
    border-bottom: 0;
    padding-top: 1px;
}
.keying {
    width: 146px;
}
.keyset {
    display: flex;
    align-items: center;
    flex: 1;
    min-width: 0;
    padding-left: 3px;
    background: linear-gradient(#999, #b2b2b2);
}
.keyset input {
    width: 100%;
}

/* outliner */
.outliner {
    position: relative;
    height: 91px;
    flex-shrink: 0;
    border-bottom: 1px solid #000;
}
.outliner .bar {
    border-bottom: 1px solid #888;
}
.scenes {
    width: 80px;
}
.tree {
    position: relative;
    height: 46px;
    padding-top: 3px;
    overflow: hidden;
    background: #6e6e6e;
}
.tree-row {
    display: flex;
    align-items: center;
    height: 20px;
    padding: 0 17px 0 18px;
}
.tree-row.selected {
    background: #7b7b7b;
    color: #fff;
}
.branch {
    position: relative;
    width: 20px;
    height: 20px;
    margin-left: 9px;
    margin-right: -6px;
    border-left: 1px solid #444;
}
.branch.plus::before {
    content: "";
    position: absolute;
    left: 0;
    top: 9px;
    width: 14px;
    height: 1px;
    background: #444;
}
.expand {
    position: absolute;
    left: -5px;
    top: 5px;
    width: 9px;
    height: 9px;
}
.halo {
    border-radius: 50%;
    background: #8b8f98;
}
.halo.orange {
    background: #a58363;
}
.name {
    flex: 1;
    padding: 1px 0 0 4px;
    overflow: hidden;
}
.cell {
    width: 20px;
    height: 20px;
    flex-shrink: 0;
    border-left: 1px solid #666;
}
.tree-scroll {
    position: absolute;
    right: 3px;
    top: 5px;
    width: 13px;
    height: 37px;
    border: 1px solid #444;
    border-radius: 7px;
    background: #5c5c5c;
}
.tree-scroll::before {
    content: "";
    position: absolute;
    left: 0;
    top: 10px;
    width: 11px;
    height: 11px;
    border-radius: 50%;
    background: #969696;
}
.h-scroll {
    height: 13px;
    margin: 4px 21px 0 5px;
    border: 1px solid #444;
    border-radius: 7px;
    background: #5c5c5c;
}
.h-thumb {
    width: 68%;
    height: 11px;
    border-right: 1px solid #444;
    border-radius: 6px;
    background: linear-gradient(#999, #777);
}

/* properties */
.properties {
    position: relative;
    display: flex;
    flex-direction: column;
    flex: 1;
    min-height: 0;
}
.properties .bar {
    height: 26px;
    border-bottom: 1px solid #555;
}
.tabs {
    display: flex;
    height: 20px;
    margin-left: 1px;
    border: 1px solid #222;
    border-radius: 4px;
}
.tabs button {
    width: 22px;
    border-left: 1px solid #222;
    background: linear-gradient(#575757, #484848);
}
.tabs .icon {
    opacity: 0.75;
}
.tabs .active {
    width: 20px;
    border-left: 0;
    border-radius: 3px 0 0 3px;
    background: #5680c2;
}
.tabs .active .icon {
    opacity: 1;
}
.props-body {
    display: flex;
    flex: 1;
    min-height: 0;
    overflow: hidden;
    padding: 0 3px 0 5px;
}
.panels {
    flex: 1;
    min-width: 0;
}
.context {
    display: flex;
    align-items: center;
    height: 35px;
    padding: 3px 0 0 5px;
}
.context .icon:first-child {
    margin-right: 6px;
}
.context span {
    padding: 1px 0 0 1px;
}
.panel {
    padding: 0 3px 6px;
    border-top: 1px solid #404040;
    box-shadow: inset 0 1px 0 #828282;
}
.panel:nth-child(n+6), .panel:nth-child(3) {
    padding-bottom: 0;
}
.panel h2 {
    position: relative;
    display: flex;
    align-items: center;
    height: 23px;
    margin: 0;
    padding-left: 5px;
    padding-top: 2px;
    white-space: nowrap;
    font: 12px/20px "DejaVu Sans Condensed", "DejaVu Sans", sans-serif;
}
.panel h2::before {
    content: "";
    width: 9px;
    height: 8px;
    margin-right: 3px;
    flex-shrink: 0;
    background: #222;
    clip-path: polygon(0 0, 100% 50%, 0 100%);
}
.panel h2.open::before {
    clip-path: polygon(0 0, 100% 0, 50% 100%);
}
.grip {
    position: absolute;
    right: 1px;
    top: 3px;
    width: 16px;
    height: 16px;
}
.columns {
    display: grid;
    grid-template-columns: 1fr 1fr;
    gap: 8px;
}
h2 + .columns {
    margin-top: 10px;
}
.presets {
    margin-top: 9px;
}
.action {
    height: 20px;
    padding: 0 3px;
    border: 1px solid #444;
    border-radius: 4px;
    background: linear-gradient(#a8a8a8, #8a8a8a);
}
.action span {
    flex: 1;
    padding-top: 1px;
}
.field {
    display: flex;
    justify-content: space-between;
    align-items: center;
    margin-top: 5px;
    padding-left: 5px;
}
.field .pick {
    width: 114px;
}
.column {
    min-width: 0;
}
.column p {
    margin: 0;
    padding-left: 5px;
    white-space: nowrap;
}
.dimensions .columns {
    margin-top: 6px;
}
.checks {
    display: flex;
    height: 20px;
    padding-left: 3px;
    gap: 14px;
}
.checks label {
    display: flex;
    align-items: center;
    gap: 5px;
    white-space: nowrap;
}
.column .checks {
    margin-top: 1px;
}
input[type="checkbox"] {
    width: 14px;
    height: 14px;
    flex-shrink: 0;
    border: 1px solid #2c2c2c;
    border-radius: 4px;
    background: linear-gradient(#4a4a4a, #5c5c5c);
}
h2 input[type="checkbox"] {
    position: relative;
    margin-right: 6px;
}
input[type="checkbox"]:checked::after {
    content: "";
    position: absolute;
    left: 4px;
    top: -2px;
    width: 4px;
    height: 9px;
    border: solid #eee;
    border-width: 0 2px 2px 0;
    transform: rotate(40deg);
}
.off {
    color: #4c4c4c;
}
.off input[type="checkbox"] {
    opacity: 0.4;
}
.samples > button, .samples > button:first-child {
    flex: 1;
    width: auto;
}
.group > button.chosen {
    background: #5680c2;
    color: #000;
}
.columns.close {
    margin-top: 2px;
}
.v-scroll {
    width: 13px;
    margin: 6px 0 3px 5px;
    border: 1px solid #444;
    border-radius: 7px;
    background: #5c5c5c;
}
.v-thumb {
    height: 72%;
    border-bottom: 1px solid #333;
    border-radius: 6px;
    background: linear-gradient(90deg, #999, #808080);
}
```
